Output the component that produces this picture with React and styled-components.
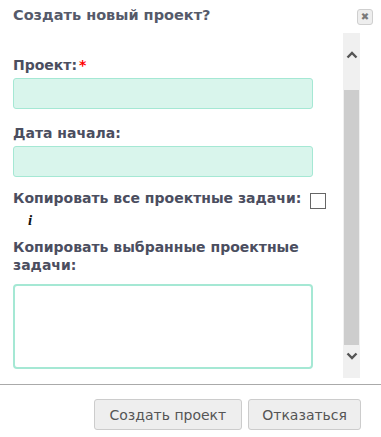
import React from "react";
import styled, { createGlobalStyle } from "styled-components";

const GlobalStyle = createGlobalStyle`
  html, body { margin: 0; padding: 0; background: #fff; }
  body { font-family: "DejaVu Sans", Verdana, sans-serif; }
  * { box-sizing: border-box; }
`;

const Dialog = styled.div`
  width: 381px;
  height: 437px;
  display: flex;
  flex-direction: column;
  background: #fff;
`;

const Header = styled.div`
  height: 33px;
  display: flex;
  justify-content: space-between;
  align-items: flex-start;
  padding: 7px 8px 0 13px;
`;

const Title = styled.h1`
  margin: 0;
  font-size: 14.5px;
  line-height: 16px;
  font-weight: bold;
  color: #555a6a;
`;

const CloseButton = styled.button`
  width: 16px;
  height: 16px;
  margin-top: 2px;
  padding: 0;
  border: 1px solid #cfcfcf;
  border-radius: 3px;
  background: #eeeeee;
  color: #7a7a7a;
  font-size: 10px;
  line-height: 14px;
  text-align: center;
  font-family: "DejaVu Sans", sans-serif;
`;

const Body = styled.div`
  height: 345px;
  display: flex;
`;

const Content = styled.div`
  flex: 1;
  overflow: hidden;
  padding: 24px 0 0 13px;
`;

const Scrollbar = styled.div`
  width: 17px;
  margin-right: 21px;
  background: #f0f0f0;
  display: flex;
  flex-direction: column;
`;

const ScrollArrow = styled.div`
  height: ${(p) => p.$h}px;
  display: flex;
  align-items: center;
  justify-content: center;
`;

const Thumb = styled.div`
  height: 255px;
  margin: 13px 0 0 1px;
  width: 15px;
  background: #cdcdcd;
`;

const Label = styled.div`
  font-size: 14px;
  line-height: ${(p) => (p.$lh ? p.$lh : 16)}px;
  font-weight: bold;
  color: #4b4e5f;
  margin-bottom: ${(p) => p.$mb || 0}px;
`;

const Required = styled.span`
  color: #ff0000;
  margin-left: 2px;
`;

const Input = styled.div`
  width: 300px;
  height: 31px;
  background: #d9f5ec;
  border: 1px solid #a5e8d4;
  border-radius: 3px;
  margin-bottom: ${(p) => p.$mb || 0}px;
`;

const TextArea = styled.div`
  width: 300px;
  height: 85px;
  background: #fff;
  border: 2px solid #a5e8d4;
  border-radius: 4px;
`;

const CheckRow = styled.div`
  display: flex;
  align-items: flex-start;
`;

const CheckBox = styled.div`
  width: 16px;
  height: 16px;
  margin: 3px 0 0 9px;
  border: 1.5px solid #666;
  background: #fff;
`;

const Info = styled.div`
  font-family: "Liberation Serif", "DejaVu Serif", serif;
  font-style: italic;
  font-weight: bold;
  font-size: 15px;
  line-height: 18px;
  color: #111;
  margin: 2px 0 9px 15px;
`;

const Footer = styled.div`
  margin-top: 6px;
  border-top: 1px solid #aaaaaa;
  display: flex;
  justify-content: flex-end;
  gap: 6px;
  padding: 14px 20px 0 0;
`;

const Button = styled.button`
  height: 31px;
  padding: 0 ${(p) => p.$px}px;
  background: #eeeeee;
  border: 1px solid #cccccc;
  border-radius: 3px;
  color: #555555;
  font-family: "DejaVu Sans", Verdana, sans-serif;
  font-size: 14px;
`;

const Chevron = ({ up }) => (
  <svg width="12" height="8" viewBox="0 0 12 8">
    <path
      d={up ? "M1.5 6.5 L6 2 L10.5 6.5" : "M1.5 1.5 L6 6 L10.5 1.5"}
      fill="none"
      stroke="#555"
      strokeWidth="2.4"
    />
  </svg>
);

export default function App() {
  return (
    <>
      <GlobalStyle />
      <Dialog>
        <Header>
          <Title>Создать новый проект?</Title>
          <CloseButton aria-label="close">✖</CloseButton>
        </Header>
        <Body>
          <Content>
            <Label $mb={5}>
              Проект:<Required>*</Required>
            </Label>
            <Input $mb={16} />
            <Label $mb={5}>Дата начала:</Label>
            <Input $mb={13} />
            <CheckRow>
              <Label>Копировать все проектные задачи:</Label>
              <CheckBox />
            </CheckRow>
            <Info>i</Info>
            <Label $lh={18} $mb={10}>
              Копировать выбранные проектные
              <br />
              задачи:
            </Label>
            <TextArea />
          </Content>
          <Scrollbar>
            <ScrollArrow $h={44}>
              <Chevron up />
            </ScrollArrow>
            <Thumb />
            <ScrollArrow $h={22}>
              <Chevron />
            </ScrollArrow>
          </Scrollbar>
        </Body>
        <Footer>
          <Button $px={15}>Создать проект</Button>
          <Button $px={13}>Отказаться</Button>
        </Footer>
      </Dialog>
    </>
  );
}
